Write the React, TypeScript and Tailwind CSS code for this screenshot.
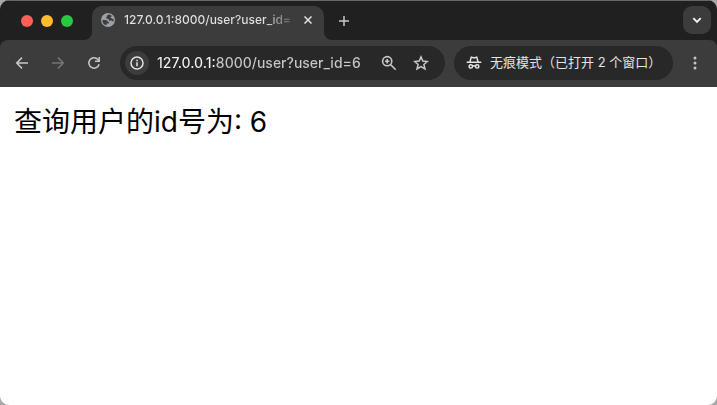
import React from 'react'

interface IconProps {
  className?: string
}

function GlobeIcon({ className }: IconProps) {
  return (
    <svg viewBox="0 0 14 14" className={className} aria-hidden="true">
      <circle cx="7" cy="7" r="7" fill="#9aa0a6" />
      <path
        d="M7.8 1.500C6.500 2 5.900 2.600 5.900 3.600c0 .8-.9.8-.9 1.500 0 .8 1 .6 1.800.6 1 0 1 .9 1 1.500 0 .8 1.400.4 2.400.4.9 0 1.100.9 2.200.8A5.600 5.600 0 0 0 12.500 6c-.4.2-.9.1-1.200-.3-.3-.5-1.500-.2-1.700-.9-.2-.8.9-.8.9-1.600 0-.4 0-.7-.2-.9a5.600 5.600 0 0 0-2.500-.8z"
        fill="#3c3c3c"
      />
      <path
        d="M1.400 6.900h3.100c1.500 0 2.300.8 2.300 2.200h1.100v1.300H5.500v1.900A5.600 5.600 0 0 1 1.400 6.900z"
        fill="#3c3c3c"
      />
    </svg>
  )
}

function CloseIcon({ className }: IconProps) {
  return (
    <svg viewBox="0 0 8 8" className={className} fill="none" stroke="currentColor" strokeWidth="1.5" aria-hidden="true">
      <path d="M.5.5l7 7M7.500.5l-7 7" />
    </svg>
  )
}

function PlusIcon({ className }: IconProps) {
  return (
    <svg viewBox="0 0 12 12" className={className} fill="none" stroke="currentColor" strokeWidth="1.5" aria-hidden="true">
      <path d="M6 1v10M1 6h10" />
    </svg>
  )
}

function ChevronIcon({ className }: IconProps) {
  return (
    <svg viewBox="0 0 12 12" className={className} fill="none" stroke="currentColor" strokeWidth="1.9" aria-hidden="true">
      <path d="M2.300 4.200L6 7.900l3.700-3.700" />
    </svg>
  )
}

function ArrowIcon({ className }: IconProps) {
  return (
    <svg viewBox="0 0 14 14" className={className} fill="none" stroke="currentColor" strokeWidth="1.5" aria-hidden="true">
      <path d="M13 7H2M7 1.600L1.700 7 7 12.400" />
    </svg>
  )
}

function ReloadIcon({ className }: IconProps) {
  return (
    <svg viewBox="0 0 14 14" className={className} fill="none" stroke="currentColor" strokeWidth="1.5" aria-hidden="true">
      <path d="M12.100 8.200A5.200 5.200 0 1 1 11 3.600L12 4.700" />
      <path d="M12.200 1v4.200H8" />
    </svg>
  )
}

function InfoIcon({ className }: IconProps) {
  return (
    <svg viewBox="0 0 14 14" className={className} fill="none" stroke="currentColor" strokeWidth="1.5" aria-hidden="true">
      <circle cx="7" cy="7" r="6" />
      <path d="M7 6.300v4M7 3.700v1.500" />
    </svg>
  )
}

function ZoomIcon({ className }: IconProps) {
  return (
    <svg viewBox="0 0 16 16" className={className} fill="none" stroke="currentColor" strokeWidth="1.600" aria-hidden="true">
      <circle cx="6.200" cy="6.200" r="4.600" />
      <path d="M9.500 9.500l5.200 5.200M6.200 4v4.400M4 6.200h4.400" />
    </svg>
  )
}

function StarIcon({ className }: IconProps) {
  return (
    <svg viewBox="0 0 16 16" className={className} fill="none" stroke="currentColor" strokeWidth="1.500" aria-hidden="true">
      <path d="M8 1.900l1.800 4.200 4.600.4-3.500 3 1.100 4.500L8 11.600 4 14l1.100-4.500-3.500-3 4.600-.4z" />
    </svg>
  )
}

function IncognitoIcon({ className }: IconProps) {
  return (
    <svg viewBox="0 0 16 16" className={className} fill="none" stroke="currentColor" strokeWidth="1.500" aria-hidden="true">
      <path d="M.7 7.300h14.600M3.900 7l1.400-4.900 2.700.8 2.700-.8L12.100 7" />
      <circle cx="4.800" cy="11.400" r="1.700" />
      <circle cx="11.200" cy="11.400" r="1.700" />
      <path d="M6.500 11.200q1.500-.7 3 0" />
    </svg>
  )
}

function TabFlare({ className }: IconProps) {
  return (
    <svg viewBox="0 0 8 8" className={className} aria-hidden="true">
      <path d="M8 0v8H0a8 8 0 0 0 8-8z" fill="#3c3c3c" />
    </svg>
  )
}

function TabStrip() {
  return (
    <div className="flex h-10 items-end border-t border-[#686868] bg-[#202020] pr-[6px] pl-[21px]">
      <div className="flex h-full items-center gap-2">
        <button aria-label="关闭窗口" className="size-3 rounded-full bg-[#ff5f57]" />
        <button aria-label="最小化" className="size-3 rounded-full bg-[#febc2e]" />
        <button aria-label="全屏" className="size-3 rounded-full bg-[#28c840]" />
      </div>
      <TabFlare className="ml-[11px] size-2" />
      <div className="flex h-[34px] w-[232px] items-center rounded-t-[10px] bg-[#3c3c3c] pr-3 pb-[6px] pl-[9px]">
        <GlobeIcon className="size-[14px] shrink-0" />
        <span className="ml-[9px] w-[168px] overflow-hidden bg-[linear-gradient(90deg,#e3e3e3_140px,#3c3c3c_174px)] bg-clip-text text-xs font-medium whitespace-nowrap text-transparent">
          127.0.0.1:8000/user?user_id=
        </span>
        <button aria-label="关闭标签页" className="ml-auto text-[#e3e3e3]">
          <CloseIcon className="size-2" />
        </button>
      </div>
      <TabFlare className="size-2 -scale-x-100" />
      <button aria-label="新标签页" className="flex h-full items-center pl-[6px] text-[#c7c7c7]">
        <PlusIcon className="size-3" />
      </button>
      <button
        aria-label="搜索标签页"
        className="mb-[6px] ml-auto flex size-7 items-center justify-center rounded-[9px] bg-[#3c3c3c] text-[#f1f1f1]"
      >
        <ChevronIcon className="size-3" />
      </button>
    </div>
  )
}

function Toolbar() {
  return (
    <div className="bg-[#202020]">
      <div className="flex items-center rounded-t-lg bg-[#3c3c3c] pt-[6px] pr-5 pb-[7px] pl-[15px]">
        <div className="flex items-center gap-[22px] text-[#c7c7c7]">
          <button aria-label="后退">
            <ArrowIcon className="size-[14px]" />
          </button>
          <button aria-label="前进" className="text-[#757575]">
            <ArrowIcon className="size-[14px] rotate-180" />
          </button>
          <button aria-label="重新加载">
            <ReloadIcon className="size-[14px]" />
          </button>
        </div>
        <div className="ml-[19px] flex h-[34px] min-w-0 flex-1 items-center rounded-full bg-[#282828] pr-4 pl-[5px]">
          <button
            aria-label="查看网站信息"
            className="flex size-6 shrink-0 items-center justify-center rounded-full bg-[#3c3c3c] text-[#e3e3e3]"
          >
            <InfoIcon className="size-[14px]" />
          </button>
          <input
            aria-label="地址栏"
            defaultValue="127.0.0.1:8000/user?user_id=6"
            className="ml-2 min-w-0 flex-1 bg-[linear-gradient(90deg,#f1f1f1_60px,#c7c7c7_60px)] bg-clip-text text-sm font-medium text-transparent outline-none"
          />
          <div className="ml-2 flex items-center gap-4 text-[#c7c7c7]">
            <button aria-label="缩放">
              <ZoomIcon className="size-4" />
            </button>
            <button aria-label="添加书签">
              <StarIcon className="size-4" />
            </button>
          </div>
        </div>
        <button className="ml-[9px] flex h-[34px] w-[219px] shrink-0 items-center gap-2 rounded-full bg-[#282828] pl-3 text-[13px] whitespace-nowrap text-[#e3e3e3]">
          <IncognitoIcon className="size-4" />
          无痕模式（已打开 2 个窗口）
        </button>
        <button aria-label="菜单" className="ml-5 text-[#c7c7c7]">
          <svg viewBox="0 0 4 14" className="h-[14px] w-1" fill="currentColor" aria-hidden="true">
            <circle cx="2" cy="2" r="1.500" />
            <circle cx="2" cy="7" r="1.500" />
            <circle cx="2" cy="12" r="1.500" />
          </svg>
        </button>
      </div>
    </div>
  )
}

export default function App() {
  return (
    <div className="min-h-screen bg-[#a8a8a8] font-['Inter','Noto_Sans_CJK_SC',sans-serif]">
      <div className="flex min-h-screen flex-col overflow-hidden rounded-[9px] bg-white">
        <header>
          <TabStrip />
          <Toolbar />
        </header>
        <main className="px-[14px] py-[17px]">
          <p className="text-[28px] leading-9 text-black">查询用户的id号为: 6</p>
        </main>
      </div>
    </div>
  )
}
